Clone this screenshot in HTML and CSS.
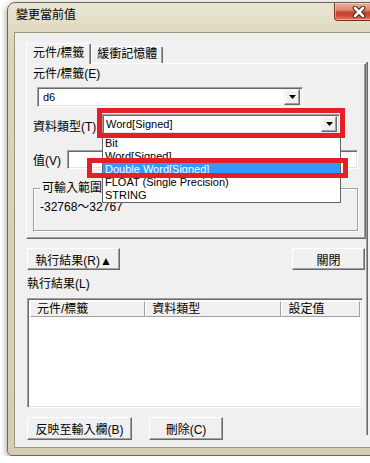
FILE: index.html
```html
<!DOCTYPE html>
<html lang="zh-Hant">
<head>
  <meta charset="UTF-8">
  <title>變更當前值</title>
  <link rel="stylesheet" href="styles.css">
</head>
<body>

<div class="window">
  <div class="titlebar">
    <span class="title">變更當前值</span>
    <div class="close-btn">
      <svg width="14" height="12" viewBox="0 0 14 12">
        <path d="M3 2 L11 10 M11 2 L3 10" stroke="#4a2219" stroke-width="4.6" stroke-linecap="round"/>
        <path d="M3 2 L11 10 M11 2 L3 10" stroke="#fff" stroke-width="2.6" stroke-linecap="round"/>
      </svg>
    </div>
  </div>

  <div class="client">
    <div class="main">
      <div class="tabs">
        <div class="tab active">元件/標籤</div>
        <div class="tab">緩衝記憶體</div>
      </div>

      <div class="panel">
        <div class="label">元件/標籤(E)</div>
        <div class="combo combo-device">
          <span class="combo-text">d6</span>
          <span class="drop-btn"><svg width="7" height="4" viewBox="0 0 7 4"><polygon points="0,0 7,0 3.5,4" fill="#000"/></svg></span>
        </div>

        <div class="field-row type-row">
          <span class="row-label type-label">資料類型(T)</span>
          <div class="combo combo-type">
            <span class="combo-text en">Word[Signed]</span>
            <span class="drop-btn"><svg width="7" height="4" viewBox="0 0 7 4"><polygon points="0,0 7,0 3.5,4" fill="#000"/></svg></span>
          </div>
        </div>

        <div class="field-row value-row">
          <span class="row-label value-label">值(V)</span>
          <div class="textbox"></div>
        </div>

        <fieldset class="range-box">
          <legend>可輸入範圍</legend>
          <div class="range-text">-32768～32767</div>
        </fieldset>

        <!-- open dropdown of the data type combo -->
        <ul class="dropdown-list">
          <li>Bit</li>
          <li>Word[Signed]</li>
          <li class="selected">Double Word[Signed]</li>
          <li>FLOAT (Single Precision)</li>
          <li>STRING</li>
        </ul>
        <div class="mark mark-combo"></div>
        <div class="mark mark-item"></div>
      </div>

      <div class="btn-row top-buttons">
        <div class="btn btn-result">執行結果(R)▲</div>
        <div class="btn btn-close">關閉</div>
      </div>

      <div class="label result-label">執行結果(L)</div>

      <div class="listview">
        <div class="lv-header">
          <div class="lv-col col-device">元件/標籤</div>
          <div class="lv-col col-type">資料類型</div>
          <div class="lv-col col-value">設定值</div>
        </div>
      </div>

      <div class="btn-row bottom-buttons">
        <div class="btn btn-reflect">反映至輸入欄(B)</div>
        <div class="btn btn-delete">刪除(C)</div>
      </div>
    </div>
    <div class="edge"></div>
  </div>
</div>

</body>
</html>
```

FILE: styles.css
```css
* {
  box-sizing: border-box;
}

body {
  margin: 0;
  background: #fff;
  overflow: hidden;
  font-family: "Liberation Sans", "Noto Sans CJK TC", sans-serif;
  font-size: 12px;
  color: #000;
}

/* window frame */
.window {
  margin: 2px 0 0 7px;
  width: 382px;
  border: 1px solid #6e6a58;
  border-radius: 8px 8px 5px 5px;
  background: linear-gradient(#e9e5d4, #dcd5ba 40px, #d6ceb0);
  box-shadow: 0 2px 7px rgba(0, 0, 0, 0.45);
  padding-bottom: 7px;
}

.titlebar {
  height: 29px;
  display: flex;
  align-items: flex-start;
  padding-left: 8px;
}

.title {
  margin-top: 5px;
  line-height: 14px;
}

.close-btn {
  margin-left: auto;
  margin-right: 5px;
  width: 49px;
  height: 18px;
  display: flex;
  align-items: center;
  justify-content: center;
  border: 1px solid #7a3020;
  border-top: none;
  border-radius: 0 0 4px 4px;
  background: linear-gradient(#eab2a2, #df8b73 40%, #c8432a 55%, #c7462d 70%, #dd7c62);
  box-shadow: inset 0 0 0 1px rgba(255, 220, 200, 0.5);
}

.client {
  margin: 0 6px;
  border: 1px solid #9d9682;
  background: #f0f0f0;
  display: flex;
}

.main {
  width: 351px;
  padding: 10px 0 7px 12px;
}

.edge {
  width: 2px;
  margin: 29px 0 12px 0;
  border-left: 1px solid #a0a0a0;
  border-right: 1px solid #696969;
}

/* classic 3d borders */
.btn,
.drop-btn,
.tab,
.panel,
.lv-col {
  background: #f0f0f0;
}

.btn {
  display: flex;
  align-items: center;
  justify-content: center;
  border: 1px solid;
  border-color: #fff #696969 #696969 #fff;
  box-shadow: inset -1px -1px #a0a0a0;
}

/* tabs */
.tabs {
  display: flex;
  align-items: flex-end;
  height: 20px;
  margin-left: -1px;
}

.tab {
  height: 17px;
  line-height: 15px;
  padding: 0 5px;
  border: 1px solid;
  border-bottom: none;
  border-color: #fff #696969 #fff #fff;
  border-radius: 2px 2px 0 0;
  box-shadow: inset -1px 0 #a0a0a0;
}

.tab.active {
  height: 21px;
  line-height: 18px;
  margin-bottom: -1px;
  padding: 0 6px;
  position: relative;
  z-index: 1;
}

.panel {
  position: relative;
  margin-left: -1px;
  width: 340px;
  padding: 3px 6px 7px 6px;
  border: 1px solid;
  border-color: #fff #696969 #696969 #fff;
  box-shadow: inset -1px -1px #a0a0a0;
}

.label {
  line-height: 14px;
}

/* combo boxes and text box */
.combo,
.textbox,
.listview {
  border: 1px solid;
  border-color: #a0a0a0 #fff #fff #a0a0a0;
  box-shadow: inset 1px 1px #696969, inset -1px -1px #e3e3e3;
  background: #fff;
}

.combo {
  height: 20px;
  display: flex;
  align-items: center;
  padding: 2px;
}

.combo-text {
  flex: 1;
  padding-left: 3px;
  font-size: 11px;
}

.combo-text.en {
  padding-left: 1px;
}

.drop-btn {
  width: 16px;
  height: 16px;
  display: flex;
  align-items: center;
  justify-content: center;
  border: 1px solid;
  border-color: #f0f0f0 #696969 #696969 #f0f0f0;
  box-shadow: inset -1px -1px #a0a0a0, inset 1px 1px #fff;
}

.combo-device {
  margin: 6px 0 0 4px;
  width: 266px;
}

.field-row {
  display: flex;
  align-items: center;
}

.type-row {
  margin-top: 6px;
}

.type-label {
  width: 69px;
  padding-top: 4px;
}

.combo-type {
  width: 238px;
}

.value-row {
  margin-top: 16px;
}

.value-label {
  width: 34px;
}

.textbox {
  width: 291px;
  height: 19px;
}

/* group box */
.range-box {
  margin: 12px 0 0 0;
  width: 325px;
  padding: 5px 6px 16px 6px;
  border: 1px solid #a0a0a0;
  box-shadow: inset 1px 1px #fff, 1px 1px #fff;
}

.range-box legend {
  padding: 0 2px;
  line-height: 14px;
}

.range-text {
  line-height: 14px;
}

/* dropdown of the type combo */
.dropdown-list {
  position: absolute;
  left: 75px;
  top: 70px;
  width: 239px;
  margin: 0;
  padding: 2px 0 0 0;
  list-style: none;
  background: #fff;
  border: 1px solid #646464;
  font-size: 11px;
}

.dropdown-list li {
  height: 13px;
  line-height: 13px;
  padding-left: 2px;
}

.dropdown-list li.selected {
  background: #3399ff;
  color: #fff;
}

.mark {
  position: absolute;
  border: 5px solid #e41f26;
}

.mark-combo {
  left: 70px;
  top: 44px;
  width: 248px;
  height: 30px;
}

.mark-item {
  left: 60px;
  top: 94px;
  width: 261px;
  height: 20px;
}

/* buttons */
.btn-row {
  display: flex;
}

.top-buttons {
  margin-top: 9px;
  justify-content: space-between;
}

.top-buttons .btn {
  height: 22px;
}

.btn-result {
  width: 93px;
}

.btn-close {
  width: 73px;
  margin-right: 1px;
}

.result-label {
  margin-top: 7px;
}

/* result list */
.listview {
  margin-top: 7px;
  width: 336px;
  height: 110px;
  padding: 2px;
}

.lv-header {
  display: flex;
  height: 16px;
}

.lv-col {
  line-height: 14px;
  padding-left: 6px;
  border: 1px solid;
  border-color: #fff #a0a0a0 #a0a0a0 #fff;
}

.col-device {
  width: 116px;
}

.col-type {
  width: 137px;
}

.col-value {
  width: 79px;
}

.bottom-buttons {
  margin-top: 9px;
  gap: 17px;
}

.bottom-buttons .btn {
  height: 23px;
}

.btn-reflect {
  width: 105px;
}

.btn-delete {
  width: 74px;
}
```
